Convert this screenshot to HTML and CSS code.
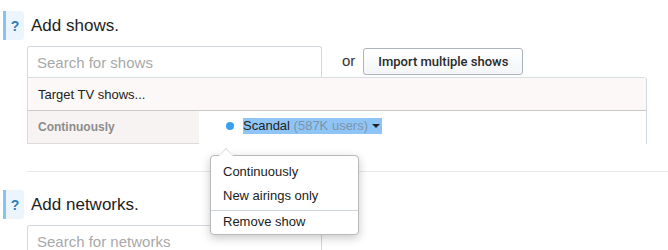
FILE: index.html
```html
<!DOCTYPE html>
<html lang="en">
  <head>
    <meta charset="UTF-8" />
    <title>Targeting</title>
    <link rel="stylesheet" href="styles.css">
  </head>
  <body>

    <div class="section">
      <div class="heading">
        <span class="badge">?</span>
        <h2 class="title">Add shows.</h2>
      </div>
      <div class="content">
        <div class="search-row">
          <div class="search"><span class="placeholder">Search for shows</span></div>
          <span class="or">or</span>
          <button class="import">Import multiple shows</button>
        </div>
        <div class="targets">
          <div class="targets-head">Target TV shows...</div>
          <div class="targets-row">
            <div class="mode">Continuously</div>
            <div class="shows">
              <span class="dot"></span>
              <span class="show-name">Scandal <span class="users">(587K users)</span> <span class="caret"></span></span>

              <div class="menu">
                <div class="menu-item">Continuously</div>
                <div class="menu-item">New airings only</div>
                <div class="menu-divider"></div>
                <div class="menu-item last">Remove show</div>
              </div>
            </div>
          </div>
        </div>
      </div>
    </div>

    <hr class="split">

    <div class="section second">
      <div class="heading">
        <span class="badge">?</span>
        <h2 class="title">Add networks.</h2>
      </div>
      <div class="content">
        <div class="search"><span class="placeholder">Search for networks</span></div>
      </div>
    </div>

  </body>
</html>
```

FILE: styles.css
```css
body, html {
  margin: 0;
  font-family: "Liberation Sans", Arial, Helvetica, sans-serif;
  background: #ffffff;
  color: #222;
  overflow: hidden;
}

.section {
  padding: 11px 0 0 3px;
}

.section.second {
  padding-top: 18px;
}

.heading {
  display: flex;
  align-items: center;
  height: 29px;
}

.badge {
  display: flex;
  align-items: center;
  justify-content: center;
  width: 18px;
  height: 29px;
  border-left: 3px solid #86c3f1;
  border-radius: 0 3px 3px 0;
  background: #edf5fc;
  color: #2f7dc0;
  font-weight: bold;
  font-size: 14px;
}

.title {
  margin: 0 0 0 7px;
  font-size: 17px;
  font-weight: normal;
  color: #1d1d1d;
}

.content {
  margin: 6px 0 0 24px;
}

.search-row {
  display: flex;
  align-items: center;
}

.search {
  box-sizing: border-box;
  width: 295px;
  height: 31px;
  padding: 0 9px;
  display: flex;
  align-items: center;
  border: 1px solid #d3d8dc;
  border-bottom: none;
  border-radius: 3px 3px 0 0;
  background: #fff;
}

.placeholder {
  color: #a9a9a9;
  font-size: 15px;
}

.or {
  margin: 0 8px 0 20px;
  font-size: 15px;
  color: #333;
  position: relative;
  top: -1px;
}

.import {
  height: 27px;
  width: 160px;
  padding: 0;
  border: 1px solid #a9b4bf;
  border-radius: 3px;
  background: linear-gradient(#ffffff, #f3f5f8);
  font-family: Roboto, "Liberation Sans", Arial, sans-serif;
  font-size: 13px;
  font-weight: 500;
  color: #2a2a2a;
}

.targets {
  width: 620px;
  box-sizing: border-box;
  border-top: 1px solid #d7dde2;
  border-right: 1px solid #cfd9e0;
  border-left: 1px solid #d7dde2;
  border-radius: 0 3px 0 0;
}

.targets-head {
  height: 32px;
  padding-left: 10px;
  display: flex;
  align-items: center;
  background: #fbf8f7;
  border-bottom: 1px solid #c9c9c9;
  font-size: 13px;
  color: #222;
}

.targets-row {
  display: flex;
  height: 33px;
}

.mode {
  box-sizing: border-box;
  width: 171px;
  padding-left: 10px;
  display: flex;
  align-items: center;
  background: #f7f3f2;
  border-bottom: 1px solid #dcdcdc;
  font-size: 12px;
  font-weight: bold;
  color: #8c8c8c;
}

.shows {
  position: relative;
  flex: 1;
  display: flex;
  align-items: center;
  padding-left: 27px;
  padding-bottom: 4px;
}

.dot {
  width: 8px;
  height: 8px;
  border-radius: 50%;
  background: #3a9ff0;
  margin-right: 9px;
}

.show-name {
  background: #8ec5f6;
  font-size: 13px;
  line-height: 16px;
  color: #222;
  padding-right: 2px;
}

.users {
  color: #7f93a8;
}

.caret {
  display: inline-block;
  width: 0;
  height: 0;
  border-left: 4px solid transparent;
  border-right: 4px solid transparent;
  border-top: 4px solid #222;
  vertical-align: middle;
}

.menu {
  position: absolute;
  left: 11px;
  top: 44px;
  width: 147px;
  padding: 4px 0 0;
  background: #fff;
  border: 1px solid #b9b9b9;
  border-radius: 4px;
  box-shadow: 0 3px 10px rgba(0, 0, 0, 0.22);
  z-index: 5;
}

.menu::before,
.menu::after {
  content: "";
  position: absolute;
  left: 8px;
  width: 0;
  height: 0;
  border-left: 7px solid transparent;
  border-right: 7px solid transparent;
}

.menu::before {
  top: -8px;
  border-bottom: 8px solid #c4c4c4;
}

.menu::after {
  top: -7px;
  border-bottom: 7px solid #fff;
}

.menu-item {
  padding: 4px 12px;
  font-size: 13px;
  line-height: 16px;
  color: #222;
}

.menu-item.last {
  padding: 3px 12px 4px;
}

.menu-divider {
  height: 1px;
  background: #cdd6dd;
  margin: 2px 0 0;
}

.split {
  margin: 27px 0 0 27px;
  border: none;
  border-top: 1px solid #e6e9eb;
  height: 0;
}
```
